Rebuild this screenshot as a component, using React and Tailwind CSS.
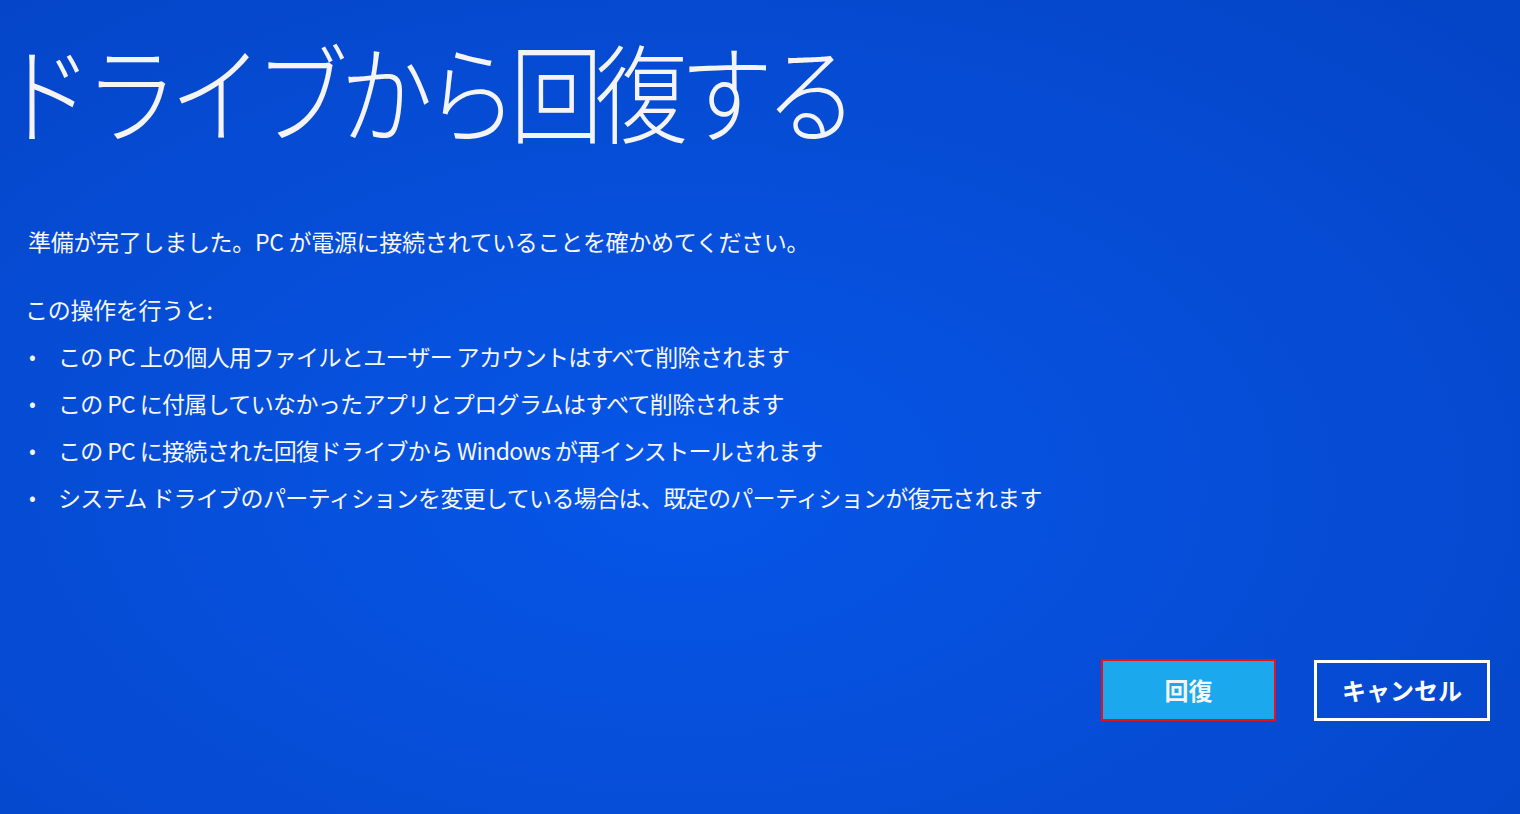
const font = {
  fontFamily: '"Noto Sans CJK JP", "Noto Sans", sans-serif',
};

const items = [
  "この PC 上の個人用ファイルとユーザー アカウントはすべて削除されます",
  "この PC に付属していなかったアプリとプログラムはすべて削除されます",
  "この PC に接続された回復ドライブから Windows が再インストールされます",
  "システム ドライブのパーティションを変更している場合は、既定のパーティションが復元されます",
];

export default function App() {
  return (
    <div
      style={font}
      className="w-[1520px] h-[814px] overflow-hidden flex flex-col text-white bg-[radial-gradient(ellipse_at_45%_60%,#0656e8_0%,#064ed8_45%,#0444c6_100%)]"
    >
      <h1 className="pl-0 pt-[17px] text-[93px] leading-[120px] font-light tracking-[-8px] text-[#f4f4f4] origin-top scale-y-[1.15]">
        ドライブから回復する
      </h1>

      <p className="pl-[28px] mt-[89px] text-[23px] leading-[30px] tracking-[-0.3px] text-[#f6f6f6]">
        準備が完了しました。PC が電源に接続されていることを確かめてください。
      </p>

      <p className="pl-[25px] mt-[38px] text-[23px] leading-[30px] tracking-[-0.3px] text-[#f6f6f6]">
        この操作を行うと:
      </p>

      <ul className="mt-[17px] flex flex-col gap-[17px] text-[#f6f6f6]">
        {items.map((t) => (
          <li key={t} className="flex items-center text-[23px] leading-[30px] tracking-[-0.65px]">
            <span className="w-[58px] pl-[29px] text-[20px]">•</span>
            <span>{t}</span>
          </li>
        ))}
      </ul>

      <div className="mt-auto mb-[93px] pr-[30px] flex justify-end items-center gap-[38px]">
        <button className="w-[175px] h-[62px] border-2 border-[#e8101a] bg-[#1ba8ec] text-[24px] font-bold text-[#f2f6fb]">
          回復
        </button>
        <button className="w-[176px] h-[61px] border-[3px] border-white bg-transparent text-[24px] font-bold text-white">
          キャンセル
        </button>
      </div>
    </div>
  );
}
